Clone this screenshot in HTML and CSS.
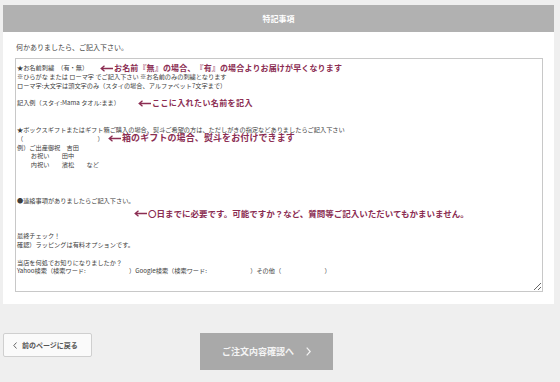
FILE: index.html
```html
<!DOCTYPE html>
<html lang="ja">
<head>
<meta charset="utf-8">
<title>特記事項</title>
<link rel="stylesheet" href="styles.css">
</head>
<body>
<div class="page">
  <section class="panel">
    <header class="panel-head">特記事項</header>
    <div class="panel-body">
      <p class="intro">何かありましたら、ご記入下さい。</p>
      <div class="memo-wrap">
        <textarea class="memo" readonly>★お名前刺繍　（有・無）
※ひらがな または ローマ字 でご記入下さい ※お名前のみの刺繍となります
ローマ字:大文字は頭文字のみ（スタイの場合、アルファベット7文字まで）

記入例（スタイ:Mama タオル:まま）


★ボックスギフトまたはギフト箱ご購入の場合、熨斗ご希望の方は、ただしがきの指定などありましたらご記入下さい
（　　　　　　　　　　　　）
例）ご出産御祝　吉田
　　 お祝い　　田中
　　 内祝い　　濱松　　など



●連絡事項がありましたらご記入下さい。



最終チェック！
確認）ラッピングは有料オプションです。

当店を何処でお知りになりましたか？
Yahoo検索（検索ワード:　　　　　　　）Google検索（検索ワード:　　　　　　　）その他（　　　　　　　）</textarea>
        <div class="note note-1"><svg class="arrow" width="13" height="7" viewBox="0 0 13 7"><path d="M1.5 3.5H13M4.5 0.8L1.2 3.5L4.5 6.2" fill="none" stroke="currentColor" stroke-width="1.3"/></svg><span>お名前『無』の場合、『有』の場合よりお届けが早くなります</span></div>
        <div class="note note-2"><svg class="arrow" width="13" height="7" viewBox="0 0 13 7"><path d="M1.5 3.5H13M4.5 0.8L1.2 3.5L4.5 6.2" fill="none" stroke="currentColor" stroke-width="1.3"/></svg><span>ここに入れたい名前を記入</span></div>
        <div class="note note-3"><svg class="arrow" width="13" height="7" viewBox="0 0 13 7"><path d="M1.5 3.5H13M4.5 0.8L1.2 3.5L4.5 6.2" fill="none" stroke="currentColor" stroke-width="1.3"/></svg><span>箱のギフトの場合、熨斗をお付けできます</span></div>
        <div class="note note-4"><svg class="arrow" width="13" height="7" viewBox="0 0 13 7"><path d="M1.5 3.5H13M4.5 0.8L1.2 3.5L4.5 6.2" fill="none" stroke="currentColor" stroke-width="1.3"/></svg><span>〇日までに必要です。可能ですか？など、質問等ご記入いただいてもかまいません。</span></div>
      </div>
    </div>
  </section>
  <div class="actions">
    <button class="btn-back" type="button"><svg width="4" height="7" viewBox="0 0 4 7"><path d="M3.5 0.5L0.8 3.5L3.5 6.5" fill="none" stroke="currentColor" stroke-width="0.9"/></svg><span>前のページに戻る</span></button>
    <button class="btn-next" type="button"><span>ご注文内容確認へ</span><svg width="5" height="9" viewBox="0 0 5 9"><path d="M0.7 0.7L4.2 4.5L0.7 8.3" fill="none" stroke="currentColor" stroke-width="1.2"/></svg></button>
  </div>
</div>
</body>
</html>
```

FILE: styles.css
```css
html, body {
  margin: 0;
  padding: 0;
}
body {
  background: #efefef;
  font-family: "Noto Sans CJK JP", "Noto Sans", sans-serif;
  color: #444;
}
.page {
  padding: 5px 6px 0 3px;
}
.panel {
  width: 551px;
  background: #fff;
}
.panel-head {
  height: 27px;
  background: #b1b1b1;
  color: #fff;
  font-size: 8px;
  font-weight: 700;
  line-height: 27px;
  text-align: center;
}
.panel-body {
  padding: 10px 11px 12px 12px;
}
.intro {
  margin: 0 0 6px 1px;
  font-size: 7px;
  line-height: 10px;
  color: #444;
}
.memo-wrap {
  position: relative;
}
.memo {
  display: block;
  box-sizing: border-box;
  width: 528px;
  height: 234px;
  margin: 0;
  padding: 5px 2px 0 1px;
  border: 1px solid #c8c8c8;
  border-radius: 0;
  background: #fff;
  font-family: "Noto Sans CJK JP", sans-serif;
  font-size: 6.2px;
  line-height: 8.85px;
  color: #3c3c3c;
  resize: vertical;
  overflow: hidden;
  outline: none;
  white-space: pre;
}
.note {
  position: absolute;
  display: flex;
  align-items: center;
  gap: 1px;
  height: 10px;
  color: #8b2d52;
  font-weight: 700;
  font-size: 8px;
  line-height: 10px;
  white-space: nowrap;
}
.arrow {
  flex: none;
}
.note-1 {
  left: 85px;
  top: 5px;
  letter-spacing: 0.15px;
}
.note-2 {
  left: 123px;
  top: 40px;
  letter-spacing: 0.4px;
}
.note-3 {
  left: 93px;
  top: 75px;
  font-size: 9px;
  letter-spacing: 0.1px;
}
.note-4 {
  left: 119px;
  top: 150px;
  font-size: 8.5px;
}
.actions {
  display: flex;
  align-items: flex-start;
  gap: 108px;
  margin-top: 29px;
}
.btn-back {
  display: flex;
  align-items: center;
  gap: 5px;
  box-sizing: border-box;
  width: 89px;
  height: 24px;
  padding: 0 0 0 9px;
  border: 1px solid #cfcfcf;
  border-radius: 2px;
  background: #fafafa;
  color: #555;
  font-family: "Noto Sans CJK JP", sans-serif;
  font-size: 7px;
  font-weight: 700;
}
.btn-next {
  display: flex;
  align-items: center;
  justify-content: center;
  gap: 12px;
  box-sizing: border-box;
  width: 133px;
  height: 37px;
  margin-top: 0;
  padding: 0;
  border: 0;
  border-radius: 0;
  background: #a9a9a9;
  color: #f4f4f4;
  font-family: "Noto Sans CJK JP", sans-serif;
  font-size: 9px;
  font-weight: 700;
}
```
